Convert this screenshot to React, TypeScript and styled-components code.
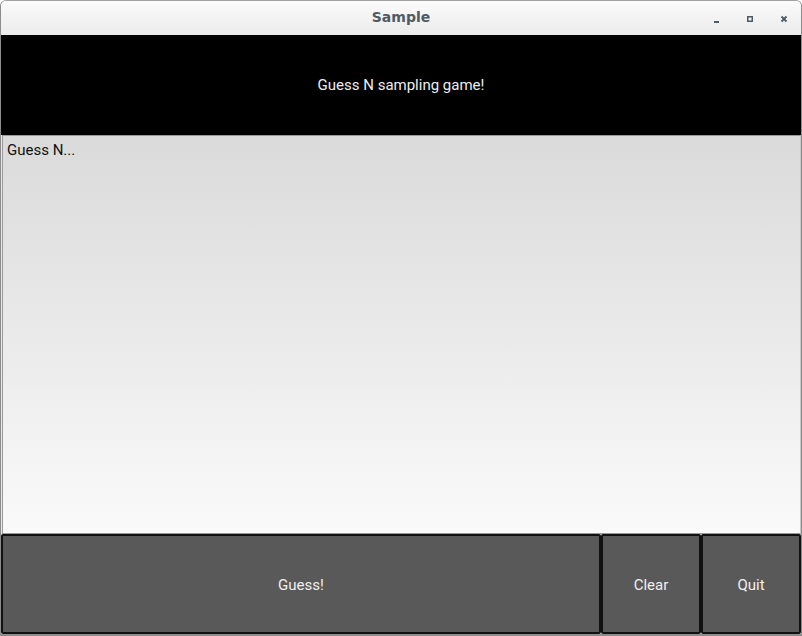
import React from "react";
import styled, { createGlobalStyle } from "styled-components";

const Global = createGlobalStyle`
  html, body { margin: 0; padding: 0; background: #ffffff; }
  body { font-family: Roboto, "Liberation Sans", sans-serif; }
`;

const Window = styled.div`
  width: 802px;
  height: 636px;
  box-sizing: border-box;
  border: 1px solid #8c8c8c;
  border-top-color: #a0a0a0;
  border-bottom-width: 2px;
  border-radius: 6px 6px 0 0;
  display: flex;
  flex-direction: column;
  overflow: hidden;
  background: #e8e8e8;
`;

const TitleBar = styled.div`
  height: 34px;
  flex: none;
  display: grid;
  grid-template-columns: 1fr auto 1fr;
  align-items: center;
  background: linear-gradient(#fbfbfb, #ebebeb);
`;

const Title = styled.div`
  grid-column: 2;
  font-family: "DejaVu Sans", sans-serif;
  font-weight: bold;
  font-size: 14px;
  color: #4f5a62;
  padding-bottom: 3px;
`;

const Controls = styled.div`
  grid-column: 3;
  justify-self: end;
  display: flex;
  align-items: center;
  gap: 18px;
  padding-right: 9px;
  padding-top: 2px;
`;

const Ctrl = styled.div`
  width: 16px;
  height: 16px;
  display: flex;
  align-items: center;
  justify-content: center;
`;

const Header = styled.div`
  height: 100px;
  flex: none;
  background: #000000;
  color: #eeeeee;
  font-size: 15px;
  display: flex;
  align-items: center;
  justify-content: center;
`;

const TextArea = styled.div`
  flex: 1;
  margin: 0 0 0 1px;
  border: 1px solid #9a9a9a;
  border-right-color: #c8c8c8;
  background: linear-gradient(#dadada, #fafafa);
  padding: 6px 4px;
  font-size: 15px;
  color: #111111;
  line-height: 16px;
`;

const ButtonRow = styled.div`
  height: 100px;
  flex: none;
  display: flex;
`;

const Button = styled.div<{ $w: number }>`
  width: ${(p) => p.$w}px;
  box-sizing: border-box;
  background: #595959;
  border: 2px solid #111111;
  border-radius: 2px;
  color: #f0f0f0;
  font-size: 15px;
  display: flex;
  align-items: center;
  justify-content: center;
  padding-top: 2px;
`;

export default function App() {
  return (
    <>
      <Global />
      <Window>
        <TitleBar>
          <Title>Sample</Title>
          <Controls>
            <Ctrl>
              <svg width="16" height="16" viewBox="0 0 16 16">
                <rect x="6" y="10" width="5" height="2" fill="#4f5a62" />
              </svg>
            </Ctrl>
            <Ctrl>
              <svg width="16" height="16" viewBox="0 0 16 16">
                <rect x="5.75" y="5.75" width="4.5" height="4.5" fill="none" stroke="#4f5a62" strokeWidth="1.5" />
              </svg>
            </Ctrl>
            <Ctrl>
              <svg width="16" height="16" viewBox="0 0 16 16">
                <path d="M5.5 5.5 L10.5 10.5 M10.5 5.5 L5.5 10.5" stroke="#4f5a62" strokeWidth="1.8" />
              </svg>
            </Ctrl>
          </Controls>
        </TitleBar>
        <Header>Guess N sampling game!</Header>
        <TextArea>Guess N...</TextArea>
        <ButtonRow>
          <Button $w={600}>Guess!</Button>
          <Button $w={100}>Clear</Button>
          <Button $w={100}>Quit</Button>
        </ButtonRow>
      </Window>
    </>
  );
}
